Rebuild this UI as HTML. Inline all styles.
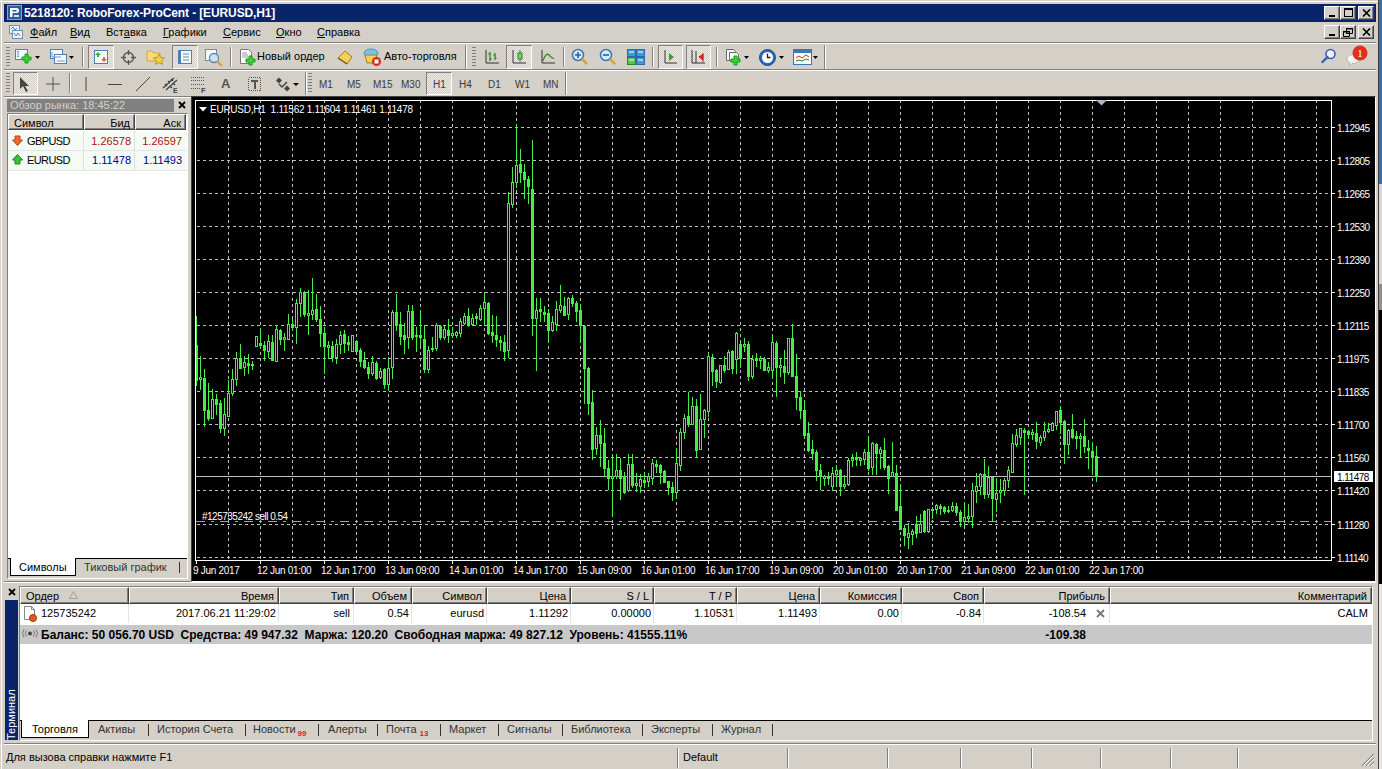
<!DOCTYPE html>
<html><head><meta charset="utf-8">
<style>
*{margin:0;padding:0;box-sizing:border-box}
html,body{width:1382px;height:769px;overflow:hidden;background:#d4d0c8;font-family:"Liberation Sans",sans-serif;font-size:11px;color:#000}
.a{position:absolute}
.t{position:absolute;white-space:nowrap;line-height:13px}
.btn3d{position:absolute;background:#d4d0c8;border-top:1px solid #fff;border-left:1px solid #fff;border-right:1px solid #404040;border-bottom:1px solid #404040;box-shadow:inset -1px -1px 0 #808080}
.pressed{position:absolute;border-top:1px solid #808080;border-left:1px solid #808080;border-right:1px solid #fff;border-bottom:1px solid #fff;background-color:#ece9e4;background-image:linear-gradient(45deg,#d4d0c8 25%,transparent 25%,transparent 75%,#d4d0c8 75%),linear-gradient(45deg,#d4d0c8 25%,transparent 25%,transparent 75%,#d4d0c8 75%);background-size:2px 2px;background-position:0 0,1px 1px}
.hsep{position:absolute;height:2px;border-top:1px solid #808080;border-bottom:1px solid #fff}
.vsep{position:absolute;width:2px;border-left:1px solid #808080;border-right:1px solid #fff}
.grip{position:absolute;width:4px;background:repeating-linear-gradient(to bottom,#808080 0,#808080 1px,transparent 1px,transparent 3px)}
.hd{position:absolute;top:0;height:17px;background:#d4d0c8;border-top:1px solid #fff;border-left:1px solid #fff;border-right:1px solid #404040;border-bottom:1px solid #404040;box-shadow:inset -1px -1px 0 #808080;text-align:right;padding-right:4px;line-height:14px;overflow:hidden;white-space:nowrap}
.cell{position:absolute;white-space:nowrap;text-align:right;line-height:14px}
.tab{position:absolute;white-space:nowrap;color:#333;line-height:13px}
.sb{position:absolute;top:748px;width:2px;height:20px;border-left:1px solid #808080;border-right:1px solid #fff}
</style></head><body>
<!-- desktop strip right -->
<div class="a" style="left:1378px;top:0;width:1px;height:769px;background:#404040"></div>
<div class="a" style="left:1379px;top:0;width:3px;height:184px;background:#3a6ea5"></div>
<div class="a" style="left:1379px;top:184px;width:3px;height:100px;background:#d8d8d8"></div>
<div class="a" style="left:1379px;top:284px;width:3px;height:26px;background:#909090"></div>
<div class="a" style="left:1379px;top:310px;width:3px;height:274px;background:#000"></div>
<div class="a" style="left:1379px;top:584px;width:3px;height:185px;background:#e8e8e8"></div>
<div class="a" style="left:1px;top:0;width:1px;height:769px;background:#fff"></div>
<div class="a" style="left:0;top:1px;width:1378px;height:1px;background:#fff"></div>

<!-- title bar -->
<div class="a" style="left:4px;top:4px;width:1372px;height:18px;background:#0a246a"></div>
<svg class="a" style="left:7px;top:5px" width="15" height="15" viewBox="0 0 15 15">
<rect x="0.5" y="0.5" width="14" height="14" fill="#2c5c9c" stroke="#7fa6d8"/>
<path d="M3 3h6.5a2.5 2.5 0 0 1 0 5H5.5v4H3z M5.5 5v1.5h3.5a.75.75 0 0 0 0-1.5z" fill="#fff" fill-rule="evenodd"/>
<rect x="7" y="10" width="5" height="2" fill="#cfe4ff"/>
</svg>
<div class="t" style="left:24px;top:5px;color:#fff;font-weight:bold;font-size:12px;line-height:16px;letter-spacing:-0.12px">5218120: RoboForex-ProCent - [EURUSD,H1]</div>
<div class="btn3d" style="left:1324px;top:6px;width:16px;height:14px"><div class="a" style="left:4px;top:8px;width:6px;height:2px;background:#000"></div></div>
<div class="btn3d" style="left:1340px;top:6px;width:16px;height:14px"><div class="a" style="left:3px;top:1px;width:9px;height:9px;border:1px solid #000;border-top-width:2px"></div></div>
<div class="btn3d" style="left:1358px;top:6px;width:16px;height:14px"><svg class="a" style="left:3px;top:2px" width="9" height="8"><path d="M1 0.5L8 7.5M8 0.5L1 7.5" stroke="#000" stroke-width="1.6"/></svg></div>

<!-- menu bar -->
<svg class="a" style="left:9px;top:25px" width="14" height="14" viewBox="0 0 14 14">
<rect x="0.5" y="0.5" width="10" height="8" fill="#e9f2fb" stroke="#6d8fb5"/>
<rect x="3.5" y="5.5" width="10" height="8" fill="#e9f2fb" stroke="#6d8fb5"/>
<path d="M2 4l2-2 2 3 2-2" stroke="#5a7fae" fill="none"/><path d="M5 8l2 3 2-3 2 3" stroke="#5a7fae" fill="none"/>
</svg>
<div class="t" style="left:30px;top:25px;font-size:11px;line-height:15px"><u>Ф</u>айл</div>
<div class="t" style="left:70px;top:25px;font-size:11px;line-height:15px"><u>В</u>ид</div>
<div class="t" style="left:106px;top:25px;font-size:11px;line-height:15px">Вст<u>а</u>вка</div>
<div class="t" style="left:163px;top:25px;font-size:11px;line-height:15px"><u>Г</u>рафики</div>
<div class="t" style="left:223px;top:25px;font-size:11px;line-height:15px"><u>С</u>ервис</div>
<div class="t" style="left:276px;top:25px;font-size:11px;line-height:15px"><u>О</u>кно</div>
<div class="t" style="left:317px;top:25px;font-size:11px;line-height:15px"><u>С</u>правка</div>
<div class="btn3d" style="left:1324px;top:25px;width:16px;height:14px"><div class="a" style="left:4px;top:8px;width:6px;height:2px;background:#000"></div></div>
<div class="btn3d" style="left:1340px;top:25px;width:16px;height:14px"><svg class="a" style="left:2px;top:1px" width="10" height="10"><path d="M3.5 1.5h6v5h-6z M0.5 4.5h6v5h-6z" stroke="#000" fill="#d4d0c8"/><path d="M3 1h7v1.5H3zM0 4h7v1.5H0z" fill="#000"/></svg></div>
<div class="btn3d" style="left:1358px;top:25px;width:16px;height:14px"><svg class="a" style="left:3px;top:2px" width="9" height="8"><path d="M1 0.5L8 7.5M8 0.5L1 7.5" stroke="#000" stroke-width="1.6"/></svg></div>

<div class="hsep" style="left:4px;top:42px;width:1372px"></div>

<!-- toolbar row 1 -->
<div class="grip" style="left:6px;top:47px;height:20px"></div>
<!-- new chart -->
<svg class="a" style="left:14px;top:48px" width="20" height="18" viewBox="0 0 20 18">
<rect x="1.5" y="1.5" width="12" height="10" fill="#f4f9ff" stroke="#4f7fb5"/>
<path d="M4 3v6M3 4l1-1 1 1M3 8l1 1 1-1" stroke="#7a98b8" fill="none"/>
<path d="M11 6h3v3h3v3h-3v3h-3v-3H8V9h3z" fill="#3bd13b" stroke="#189a18"/>
</svg>
<svg class="a" style="left:35px;top:56px" width="5" height="3"><path d="M0 0h5L2.5 3z" fill="#000"/></svg>
<!-- profiles -->
<svg class="a" style="left:49px;top:48px" width="20" height="18" viewBox="0 0 20 18">
<rect x="1.5" y="1.5" width="12" height="9" fill="#f4f9ff" stroke="#4f7fb5"/>
<rect x="5.5" y="6.5" width="12" height="9" fill="#f4f9ff" stroke="#4f7fb5"/>
<path d="M3 4v5h9M8 13h8" stroke="#7a98b8" fill="none"/>
</svg>
<svg class="a" style="left:69px;top:56px" width="5" height="3"><path d="M0 0h5L2.5 3z" fill="#000"/></svg>
<div class="vsep" style="left:82px;top:47px;height:20px"></div>
<div class="pressed" style="left:88px;top:45px;width:26px;height:24px"></div>
<svg class="a" style="left:92px;top:48px" width="18" height="18" viewBox="0 0 18 18">
<rect x="2.5" y="2.5" width="13" height="13" fill="#f4f9ff" stroke="#4f7fb5"/>
<path d="M6 4l3 3H7v2H5V7H3z" fill="#2fb52f"/>
<path d="M9 14l3-3h-2V9H8v2H6z" fill="#e8663a" transform="translate(3 0)"/>
</svg>
<!-- navigator crosshair -->
<svg class="a" style="left:120px;top:49px" width="17" height="17" viewBox="0 0 17 17">
<circle cx="8.5" cy="8.5" r="5" stroke="#555" stroke-width="1.3" fill="none"/>
<path d="M8.5 1v5M8.5 11v5M1 8.5h5M11 8.5h5" stroke="#555" stroke-width="1.3"/>
</svg>
<!-- folder star -->
<svg class="a" style="left:146px;top:48px" width="20" height="18" viewBox="0 0 20 18">
<path d="M1 3h5l2 2h6v8H1z" fill="#f5dc7a" stroke="#c9a640"/>
<path d="M13 6l1.7 3.5 3.8.5-2.8 2.6.7 3.8L13 14.6l-3.4 1.8.7-3.8-2.8-2.6 3.8-.5z" fill="#f7d33a" stroke="#b8922a"/>
</svg>
<div class="pressed" style="left:172px;top:45px;width:26px;height:24px"></div>
<svg class="a" style="left:176px;top:48px" width="18" height="18" viewBox="0 0 18 18">
<rect x="2.5" y="2.5" width="13" height="13" fill="#f4f9ff" stroke="#4f7fb5"/>
<rect x="3" y="3" width="2" height="12" fill="#4f7fb5"/>
<path d="M7 6h6M7 9h6M7 12h6" stroke="#6b8bb0"/>
</svg>
<!-- tester -->
<svg class="a" style="left:204px;top:48px" width="20" height="19" viewBox="0 0 20 19">
<rect x="1.5" y="1.5" width="11" height="11" fill="#f4f9ff" stroke="#6b8bb0"/>
<circle cx="10" cy="10" r="4.5" fill="#cfe3f5" stroke="#5a83b0" stroke-width="1.3"/>
<path d="M13 13l5 5" stroke="#d6a53a" stroke-width="2.4"/>
</svg>
<div class="vsep" style="left:230px;top:47px;height:20px"></div>
<!-- new order -->
<svg class="a" style="left:239px;top:48px" width="18" height="20" viewBox="0 0 18 20">
<path d="M1.5 1.5h8l3 3v11h-11z" fill="#fff" stroke="#777"/>
<path d="M3 5h5M3 7h6M3 9h6" stroke="#999"/>
<path d="M10 8h3v3h3v3h-3v3h-3v-3H7v-3h3z" fill="#3bd13b" stroke="#189a18"/>
</svg>
<div class="t" style="left:257px;top:50px">Новый ордер</div>
<!-- metaeditor -->
<svg class="a" style="left:336px;top:49px" width="18" height="17" viewBox="0 0 18 17">
<path d="M2 9l7-7 7 6-5 7z" fill="#f2cf55" stroke="#a67d22"/>
<path d="M2 9l9 6" stroke="#7a5a18" stroke-width="1.5"/>
</svg>
<!-- autotrading -->
<svg class="a" style="left:363px;top:47px" width="19" height="20" viewBox="0 0 19 20">
<ellipse cx="8" cy="6" rx="7" ry="4" fill="#7cc0ea" stroke="#4c8fc0"/>
<path d="M2 8h12l-2 8H4z" fill="#f2cf55" stroke="#a67d22"/>
<circle cx="13.5" cy="14.5" r="4.5" fill="#d62a1a"/>
<rect x="11.5" y="12.5" width="4" height="4" fill="#fff"/>
</svg>
<div class="t" style="left:384px;top:50px">Авто-торговля</div>
<!-- toolbar 1b -->
<div class="vsep" style="left:465px;top:45px;height:24px"></div>
<div class="grip" style="left:472px;top:47px;height:20px"></div>
<svg class="a" style="left:484px;top:49px" width="16" height="16" viewBox="0 0 16 16">
<path d="M2 1v13h13" stroke="#333" fill="none"/>
<path d="M6 3v9M4.5 5h1.5M6 10h1.5M11 4v7M9.5 6h1.5M11 9h1.5" stroke="#2a8a2a" stroke-width="1.3"/>
</svg>
<div class="pressed" style="left:506px;top:45px;width:26px;height:24px"></div>
<svg class="a" style="left:511px;top:49px" width="16" height="16" viewBox="0 0 16 16">
<path d="M2 1v13h13" stroke="#333" fill="none"/>
<path d="M9 1v12" stroke="#2a8a2a"/><rect x="7" y="4" width="4" height="6" fill="#6fd26f" stroke="#2a8a2a"/>
</svg>
<svg class="a" style="left:540px;top:49px" width="16" height="16" viewBox="0 0 16 16">
<path d="M2 1v13h13" stroke="#333" fill="none"/>
<path d="M3 12c2-6 4-8 6-6s3 4 5 3" stroke="#2a8a2a" fill="none" stroke-width="1.2"/>
</svg>
<div class="vsep" style="left:563px;top:47px;height:20px"></div>
<svg class="a" style="left:571px;top:48px" width="18" height="18" viewBox="0 0 18 18">
<circle cx="7" cy="7" r="5.5" fill="#d9ecfb" stroke="#3b77b8" stroke-width="1.5"/>
<path d="M4 7h6M7 4v6" stroke="#2060a8" stroke-width="1.6"/>
<path d="M11 11l5 5" stroke="#d6a53a" stroke-width="2.5"/>
</svg>
<svg class="a" style="left:599px;top:48px" width="18" height="18" viewBox="0 0 18 18">
<circle cx="7" cy="7" r="5.5" fill="#d9ecfb" stroke="#3b77b8" stroke-width="1.5"/>
<path d="M4 7h6" stroke="#2060a8" stroke-width="1.6"/>
<path d="M11 11l5 5" stroke="#d6a53a" stroke-width="2.5"/>
</svg>
<svg class="a" style="left:627px;top:49px" width="18" height="17" viewBox="0 0 18 17">
<rect x="0.5" y="0.5" width="8" height="7" fill="#3b9bd8" stroke="#2a6aa8"/><rect x="9.5" y="0.5" width="8" height="7" fill="#3b9bd8" stroke="#2a6aa8"/>
<rect x="0.5" y="8.5" width="8" height="7" fill="#5cc05c" stroke="#2a8a2a"/><rect x="9.5" y="8.5" width="8" height="7" fill="#3b9bd8" stroke="#2a6aa8"/>
<path d="M2 3h5M11 3h5M2 11h5M11 11h5" stroke="#fff"/>
</svg>
<div class="vsep" style="left:652px;top:47px;height:20px"></div>
<div class="pressed" style="left:658px;top:45px;width:25px;height:24px"></div>
<svg class="a" style="left:662px;top:49px" width="16" height="16" viewBox="0 0 16 16">
<path d="M3 1v13h12" stroke="#333" fill="none"/><path d="M7 4l5 4-5 4z" fill="#2fa52f"/>
</svg>
<div class="pressed" style="left:686px;top:45px;width:25px;height:24px"></div>
<svg class="a" style="left:690px;top:49px" width="16" height="16" viewBox="0 0 16 16">
<path d="M2 1v13h13M6 2v12" stroke="#333" fill="none"/><path d="M13 4v9M9 8l4-3v6z" stroke="#d62a1a" fill="#d62a1a"/>
</svg>
<div class="vsep" style="left:716px;top:47px;height:20px"></div>
<svg class="a" style="left:725px;top:47px" width="19" height="20" viewBox="0 0 19 20">
<path d="M1.5 2.5h7l2 2v9h-9z" fill="#fff" stroke="#666"/><path d="M4.5 5.5h7l2 2v6h-9z" fill="#fff" stroke="#666"/>
<path d="M9 9h3v3h3v3h-3v3H9v-3H6v-3h3z" fill="#3bd13b" stroke="#189a18"/>
</svg>
<svg class="a" style="left:744px;top:56px" width="5" height="3"><path d="M0 0h5L2.5 3z" fill="#000"/></svg>
<svg class="a" style="left:758px;top:48px" width="19" height="19" viewBox="0 0 19 19">
<circle cx="9.5" cy="9.5" r="8" fill="#2a6ab8" stroke="#1a4a90"/>
<circle cx="9.5" cy="9.5" r="5.5" fill="#fff"/>
<path d="M9.5 5.5v4h3" stroke="#222" stroke-width="1.3" fill="none"/>
</svg>
<svg class="a" style="left:779px;top:56px" width="5" height="3"><path d="M0 0h5L2.5 3z" fill="#000"/></svg>
<svg class="a" style="left:793px;top:49px" width="19" height="16" viewBox="0 0 19 16">
<rect x="0.5" y="0.5" width="18" height="15" fill="#f4f9ff" stroke="#3b77b8"/>
<rect x="1" y="1" width="17" height="3" fill="#3b77b8"/>
<path d="M3 9l3-2 3 2 4-3 3 2" stroke="#d62a1a" fill="none"/><path d="M3 12l3-1 3 1 4-2 3 1" stroke="#2a8a2a" fill="none"/>
</svg>
<svg class="a" style="left:813px;top:56px" width="5" height="3"><path d="M0 0h5L2.5 3z" fill="#000"/></svg>
<div class="vsep" style="left:824px;top:45px;height:24px"></div>
<!-- right icons -->
<svg class="a" style="left:1320px;top:48px" width="17" height="16" viewBox="0 0 17 16">
<circle cx="10.5" cy="6" r="4.5" fill="#eef4ff" stroke="#3b5bb8" stroke-width="1.6"/>
<path d="M7.5 9l-5 5" stroke="#3b5bb8" stroke-width="2.4" stroke-linecap="round"/>
</svg>
<svg class="a" style="left:1345px;top:45px" width="26" height="22" viewBox="0 0 26 22">
<ellipse cx="8" cy="14" rx="6" ry="4.5" fill="#f4f4f4" stroke="#b8b8b8"/>
<path d="M5 17l-1 4 4-3" fill="#f4f4f4" stroke="#b8b8b8"/>
<circle cx="15" cy="8" r="7.5" fill="#e0301e"/>
<text x="15" y="12" font-family="Liberation Serif" font-size="11" fill="#fff" text-anchor="middle">1</text>
</svg>
<div class="hsep" style="left:4px;top:69px;width:1372px"></div>
<!-- toolbar row 2 -->
<div class="grip" style="left:6px;top:73px;height:20px"></div>
<div class="pressed" style="left:13px;top:72px;width:25px;height:23px"></div>
<svg class="a" style="left:19px;top:76px" width="12" height="16" viewBox="0 0 12 16"><path d="M1 1v12l3-3 3 6 2-1-3-5h4z" fill="#444"/></svg>
<svg class="a" style="left:45px;top:76px" width="16" height="16" viewBox="0 0 16 16"><path d="M8 1v14M1 8h14" stroke="#555"/></svg>
<div class="vsep" style="left:69px;top:73px;height:20px"></div>
<svg class="a" style="left:84px;top:76px" width="4" height="16"><path d="M2 1v14" stroke="#444"/></svg>
<svg class="a" style="left:107px;top:76px" width="16" height="16"><path d="M1 8.5h14" stroke="#444"/></svg>
<svg class="a" style="left:135px;top:76px" width="16" height="16"><path d="M1 15L15 1" stroke="#444"/></svg>
<svg class="a" style="left:162px;top:75px" width="18" height="18" viewBox="0 0 18 18"><path d="M1 13L12 3M4 15L15 5M3 9l2 2M6 6l2 2M9 4l2 2M11 8l2 2M8 11l2 2" stroke="#444" stroke-width="1.3"/><text x="11" y="17.5" font-size="7" font-family="Liberation Sans" font-weight="bold" fill="#444">E</text></svg>
<svg class="a" style="left:191px;top:76px" width="18" height="18" viewBox="0 0 18 18" shape-rendering="crispEdges"><path d="M0 1.5h14M0 4.5h14M0 8.5h14M0 12.5h9" stroke="#555" stroke-dasharray="1 1"/><text x="10" y="17" font-size="7.5" font-family="Liberation Sans" font-weight="bold" fill="#444">F</text></svg>
<div class="t" style="left:221px;top:77px;font-size:13px;font-weight:bold;color:#555">A</div>
<svg class="a" style="left:248px;top:77px" width="14" height="15" viewBox="0 0 14 15" shape-rendering="crispEdges"><rect x="0.5" y="0.5" width="12" height="13" fill="none" stroke="#555" stroke-dasharray="1 1"/><path d="M3 3h7v2H7.5v7h-2V5H3z" fill="#555"/></svg>
<svg class="a" style="left:275px;top:77px" width="24" height="15" viewBox="0 0 24 15"><path d="M1 3.5L4 0.5 7 3.5 4 6.5z" fill="#444"/><path d="M9 11.5L12 8.5 15 11.5 12 14.5z" fill="#444"/><path d="M4 7l3 3 5-5" stroke="#444" stroke-width="1.5" fill="none"/><path d="M18 6h6l-3 3z" fill="#000"/></svg>
<div class="vsep" style="left:305px;top:72px;height:23px"></div>
<div class="grip" style="left:308px;top:73px;height:20px"></div>
<div class="t" style="left:319px;top:78px;font-size:10px;color:#3a3a3a">M1</div>
<div class="t" style="left:347px;top:78px;font-size:10px;color:#3a3a3a">M5</div>
<div class="t" style="left:373px;top:78px;font-size:10px;color:#3a3a3a">M15</div>
<div class="t" style="left:401px;top:78px;font-size:10px;color:#3a3a3a">M30</div>
<div class="pressed" style="left:426px;top:72px;width:26px;height:23px"></div>
<div class="t" style="left:433px;top:78px;font-size:10px;color:#3a3a3a">H1</div>
<div class="t" style="left:459px;top:78px;font-size:10px;color:#3a3a3a">H4</div>
<div class="t" style="left:488px;top:78px;font-size:10px;color:#3a3a3a">D1</div>
<div class="t" style="left:515px;top:78px;font-size:10px;color:#3a3a3a">W1</div>
<div class="t" style="left:543px;top:78px;font-size:10px;color:#3a3a3a">MN</div>
<div class="vsep" style="left:565px;top:72px;height:23px"></div>
<div class="hsep" style="left:4px;top:96px;width:187px"></div>


<!-- market watch -->
<div class="a" style="left:7px;top:99px;width:167px;height:13px;background:#808080"></div>
<div class="t" style="left:10px;top:99px;color:#d4d0c8;line-height:13px">Обзор рынка: 18:45:22</div>
<svg class="a" style="left:178px;top:101px" width="8" height="8"><path d="M1 1l6 6M7 1L1 7" stroke="#000" stroke-width="1.8"/></svg>
<div class="a" style="left:7px;top:113px;width:181px;height:466px;background:#fff;border-top:1px solid #808080;border-left:1px solid #808080;border-right:1px solid #fff;border-bottom:1px solid #fff"></div>
<div class="hd" style="left:8px;top:114px;width:76px;height:16px;line-height:13px;padding-top:1px;text-align:left;padding-left:5px"><span style="position:relative;top:1px">Символ</span></div>
<div class="hd" style="left:84px;top:114px;width:51px;height:16px;line-height:13px;padding-top:1px"><span style="position:relative;top:1px">Бид</span></div>
<div class="hd" style="left:135px;top:114px;width:51px;height:16px;line-height:13px;padding-top:1px"><span style="position:relative;top:1px">Аск</span></div>
<div class="a" style="left:8px;top:131px;width:179px;height:39px;background:#f4fbf4"></div>
<div class="a" style="left:8px;top:150px;width:179px;height:1px;background:#e4e4e4"></div>
<div class="a" style="left:8px;top:170px;width:179px;height:1px;background:#e4e4e4"></div>
<div class="a" style="left:83px;top:131px;width:1px;height:39px;background:#e0e0e0"></div>
<div class="a" style="left:134px;top:131px;width:1px;height:39px;background:#e0e0e0"></div>
<svg class="a" style="left:12px;top:135px" width="11" height="11" viewBox="0 0 11 11"><path d="M3 1h5v4h2.5L5.5 10.5 0.5 5H3z" fill="#f06a30" stroke="#b84818"/></svg>
<svg class="a" style="left:12px;top:154px" width="11" height="11" viewBox="0 0 11 11"><path d="M3 10h5V6h2.5L5.5 0.5 0.5 6H3z" fill="#3cc03c" stroke="#1a8a1a"/></svg>
<div class="t" style="left:27px;top:135px;letter-spacing:-0.6px">GBPUSD</div>
<div class="t" style="left:27px;top:154px;letter-spacing:-0.6px">EURUSD</div>
<div class="cell" style="left:84px;top:134px;width:47px;color:#b01010">1.26578</div>
<div class="cell" style="left:135px;top:134px;width:47px;color:#b01010">1.26597</div>
<div class="cell" style="left:84px;top:153px;width:47px;color:#000090">1.11478</div>
<div class="cell" style="left:135px;top:153px;width:47px;color:#000090">1.11493</div>
<!-- tabs -->
<div class="a" style="left:8px;top:558px;width:179px;height:20px;background:#d4d0c8;border-top:1px solid #000"></div>
<div class="a" style="left:10px;top:558px;width:66px;height:18px;background:#fff;border-left:1px solid #000;border-bottom:1px solid #000;border-right:1px solid #000"></div>
<div class="t" style="left:19px;top:561px">Символы</div>
<div class="t" style="left:84px;top:561px;color:#333">Тиковый график</div>
<div class="a" style="left:179px;top:562px;width:1px;height:11px;background:#333"></div>

<div class="hsep" style="left:4px;top:581px;width:187px"></div>


<!-- chart window -->
<div class="a" style="left:191px;top:96px;width:1185px;height:486px;border-top:1px solid #404040;border-left:1px solid #404040;border-right:1px solid #fff;border-bottom:1px solid #fff"></div>
<div class="a" style="left:192px;top:97px;width:1183px;height:484px;overflow:hidden">
<svg width="1183" height="484" viewBox="192 97 1183 484" shape-rendering="crispEdges" style="position:absolute;left:0;top:0">
<rect x="192" y="97" width="1183" height="484" fill="#000"/>
<path d="M196 127.5H1331 M196 160.5H1331 M196 193.5H1331 M196 226.5H1331 M196 259.5H1331 M196 292.5H1331 M196 325.5H1331 M196 358.5H1331 M196 391.5H1331 M196 424.5H1331 M196 457.5H1331 M196 490.5H1331 M196 524.5H1331 M196 557.5H1331" stroke="#c0c0c0" stroke-width="1" stroke-dasharray="3 3" stroke-dashoffset="-1" fill="none"/>
<path d="M228.5 100V560 M260.5 100V560 M292.5 100V560 M324.5 100V560 M356.5 100V560 M388.5 100V560 M420.5 100V560 M452.5 100V560 M484.5 100V560 M516.5 100V560 M548.5 100V560 M580.5 100V560 M612.5 100V560 M644.5 100V560 M676.5 100V560 M708.5 100V560 M740.5 100V560 M772.5 100V560 M804.5 100V560 M836.5 100V560 M868.5 100V560 M900.5 100V560 M932.5 100V560 M964.5 100V560 M996.5 100V560 M1028.5 100V560 M1060.5 100V560 M1092.5 100V560 M1124.5 100V560 M1156.5 100V560 M1188.5 100V560 M1220.5 100V560 M1252.5 100V560 M1284.5 100V560 M1316.5 100V560" stroke="#c0c0c0" stroke-width="1" stroke-dasharray="3 3" fill="none"/>
<path d="M196 521.5H1331" stroke="#5fd35f" stroke-width="1" stroke-dasharray="9 6 3 6" fill="none"/>
<path d="M196 476.5H1331" stroke="#c0c0c0" stroke-width="1" fill="none"/>
<path d="M196.5 316V386 M200.5 356V390 M204.5 369V427 M208.5 383V421 M212.5 389V419 M216.5 394V415 M220.5 400V433 M224.5 398V436 M228.5 380V417 M232.5 369V396 M236.5 352V386 M240.5 344V369 M244.5 356V376 M248.5 354V374 M252.5 361V370 M256.5 336V347 M260.5 328V349 M264.5 341V361 M268.5 335V358 M272.5 335V361 M276.5 325V362 M280.5 329V345 M284.5 333V351 M288.5 314V340 M292.5 319V330 M296.5 299V344 M300.5 288V317 M304.5 291V317 M308.5 290V335 M312.5 278V320 M316.5 294V322 M320.5 306V347 M324.5 327V374 M328.5 341V359 M332.5 341V362 M336.5 339V364 M340.5 331V354 M344.5 330V353 M348.5 336V351 M352.5 335V352 M356.5 340V352 M360.5 348V367 M364.5 352V369 M368.5 362V379 M372.5 356V376 M376.5 361V380 M380.5 368V379 M384.5 368V389 M388.5 357V391 M392.5 310V379 M396.5 294V331 M400.5 312V345 M404.5 323V354 M408.5 305V349 M412.5 305V340 M416.5 327V352 M420.5 310V346 M424.5 325V373 M428.5 346V373 M432.5 337V352 M436.5 323V351 M440.5 325V340 M444.5 326V340 M448.5 319V343 M452.5 327V338 M456.5 331V338 M460.5 318V337 M464.5 313V325 M468.5 308V327 M472.5 314V326 M476.5 313V325 M480.5 305V321 M484.5 292V326 M488.5 302V335 M492.5 315V343 M496.5 316V347 M500.5 336V351 M504.5 335V361 M508.5 192V358 M512.5 167V208 M516.5 124V188 M520.5 149V183 M524.5 164V199 M528.5 176V204 M532.5 140V336 M536.5 298V371 M540.5 298V322 M544.5 306V322 M548.5 309V343 M552.5 316V332 M556.5 301V331 M560.5 285V313 M564.5 297V316 M568.5 297V320 M572.5 295V307 M576.5 301V322 M580.5 304V343 M584.5 325V404 M588.5 367V415 M592.5 390V460 M596.5 427V455 M600.5 420V467 M604.5 428V477 M608.5 460V490 M612.5 455V517 M616.5 454V479 M620.5 458V500 M624.5 472V494 M628.5 454V492 M632.5 454V488 M636.5 473V492 M640.5 474V493 M644.5 472V488 M648.5 473V487 M652.5 459V485 M656.5 460V473 M660.5 464V484 M664.5 470V483 M668.5 481V495 M672.5 482V501 M676.5 448V498 M680.5 428V471 M684.5 414V439 M688.5 392V427 M692.5 397V425 M696.5 399V457 M700.5 394V450 M704.5 409V438 M708.5 353V417 M712.5 354V386 M716.5 369V388 M720.5 365V384 M724.5 356V373 M728.5 350V370 M732.5 350V374 M736.5 332V374 M740.5 343V368 M744.5 338V352 M748.5 341V381 M752.5 355V379 M756.5 353V367 M760.5 356V369 M764.5 357V371 M768.5 362V373 M772.5 335V379 M776.5 341V397 M780.5 358V377 M784.5 350V384 M788.5 338V375 M792.5 324V377 M796.5 354V410 M800.5 391V419 M804.5 401V437 M808.5 422V452 M812.5 440V460 M816.5 450V481 M820.5 464V490 M824.5 475V486 M828.5 472V485 M832.5 467V491 M836.5 465V485 M840.5 469V496 M844.5 475V489 M848.5 458V486 M852.5 454V467 M856.5 452V466 M860.5 457V466 M864.5 449V465 M868.5 437V471 M872.5 442V475 M876.5 443V475 M880.5 447V469 M884.5 438V470 M888.5 465V494 M892.5 442V477 M896.5 465V511 M900.5 484V530 M904.5 525V546 M908.5 523V549 M912.5 529V545 M916.5 516V538 M920.5 514V533 M924.5 510V533 M928.5 509V533 M932.5 507V519 M936.5 504V514 M940.5 504V515 M944.5 506V514 M948.5 506V513 M952.5 502V512 M956.5 503V516 M960.5 510V527 M964.5 502V526 M968.5 504V523 M972.5 483V528 M976.5 473V503 M980.5 473V495 M984.5 459V499 M988.5 466V498 M992.5 477V522 M996.5 478V512 M1000.5 479V503 M1004.5 478V496 M1008.5 466V488 M1012.5 434V473 M1016.5 429V447 M1020.5 428V445 M1024.5 428V495 M1028.5 430V439 M1032.5 429V440 M1036.5 422V449 M1040.5 435V446 M1044.5 422V441 M1048.5 423V433 M1052.5 422V431 M1056.5 411V430 M1060.5 406V434 M1064.5 420V464 M1068.5 429V455 M1072.5 414V439 M1076.5 431V449 M1080.5 433V458 M1084.5 419V453 M1088.5 440V469 M1092.5 442V475 M1096.5 446V482" stroke="#48ec48" stroke-width="1" fill="none"/>
<path d="M195 345h3v36h-3z M203 378h3v33h-3z M207 410h3v9h-3z M215 399h3v6h-3z M219 403h3v26h-3z M239 358h3v11h-3z M247 363h3v3h-3z M251 364h3v2h-3z M259 343h3v3h-3z M263 345h3v6h-3z M271 342h3v19h-3z M279 330h3v10h-3z M291 324h3v4h-3z M303 292h3v23h-3z M315 309h3v11h-3z M319 319h3v15h-3z M323 333h3v14h-3z M331 346h3v12h-3z M343 334h3v10h-3z M347 342h3v3h-3z M355 341h3v11h-3z M359 350h3v12h-3z M363 360h3v8h-3z M367 367h3v7h-3z M375 363h3v16h-3z M383 369h3v16h-3z M395 312h3v14h-3z M399 324h3v13h-3z M403 335h3v5h-3z M411 311h3v27h-3z M415 335h3v2h-3z M419 335h3v3h-3z M423 339h3v31h-3z M431 348h3v2h-3z M439 326h3v12h-3z M447 330h3v6h-3z M467 316h3v10h-3z M475 316h3v3h-3z M487 303h3v31h-3z M491 332h3v4h-3z M495 335h3v5h-3z M499 340h3v3h-3z M503 342h3v10h-3z M519 164h3v9h-3z M523 172h3v8h-3z M527 179h3v8h-3z M531 189h3v130h-3z M539 309h3v3h-3z M543 312h3v3h-3z M547 313h3v18h-3z M563 306h3v10h-3z M571 298h3v6h-3z M575 303h3v9h-3z M579 310h3v16h-3z M583 326h3v43h-3z M587 368h3v36h-3z M591 402h3v48h-3z M599 435h3v9h-3z M603 443h3v26h-3z M607 468h3v11h-3z M619 470h3v9h-3z M623 476h3v17h-3z M631 464h3v22h-3z M643 480h3v3h-3z M655 464h3v3h-3z M659 465h3v8h-3z M663 471h3v12h-3z M667 481h3v7h-3z M671 487h3v6h-3z M687 416h3v9h-3z M695 406h3v45h-3z M711 357h3v15h-3z M715 370h3v12h-3z M723 365h3v6h-3z M731 351h3v18h-3z M739 344h3v15h-3z M747 344h3v33h-3z M755 358h3v3h-3z M763 359h3v12h-3z M775 343h3v25h-3z M783 366h3v7h-3z M791 338h3v39h-3z M795 376h3v22h-3z M799 397h3v14h-3z M803 410h3v26h-3z M807 433h3v18h-3z M811 449h3v5h-3z M815 452h3v19h-3z M819 470h3v7h-3z M827 476h3v3h-3z M839 470h3v17h-3z M855 457h3v3h-3z M867 452h3v17h-3z M875 444h3v10h-3z M883 450h3v18h-3z M887 466h3v13h-3z M895 473h3v38h-3z M899 506h3v24h-3z M903 528h3v8h-3z M915 524h3v10h-3z M923 511h3v21h-3z M931 509h3v2h-3z M939 506h3v3h-3z M943 507h3v5h-3z M947 510h3v2h-3z M955 506h3v7h-3z M959 512h3v10h-3z M983 474h3v21h-3z M991 477h3v22h-3z M1023 430h3v3h-3z M1027 431h3v4h-3z M1035 433h3v9h-3z M1059 410h3v13h-3z M1063 421h3v24h-3z M1071 429h3v9h-3z M1075 436h3v3h-3z M1083 436h3v11h-3z M1087 448h3v3h-3z M1091 451h3v7h-3z M1095 456h3v21h-3z" fill="#48ec48"/>
<path d="M199 377h3v3h-3z M211 399h3v20h-3z M223 414h3v15h-3z M227 393h3v24h-3z M231 379h3v15h-3z M235 358h3v22h-3z M243 362h3v6h-3z M255 336h3v11h-3z M267 341h3v11h-3z M275 329h3v33h-3z M283 337h3v3h-3z M287 324h3v16h-3z M295 303h3v25h-3z M299 292h3v12h-3z M307 313h3v3h-3z M311 310h3v5h-3z M327 345h3v3h-3z M335 344h3v14h-3z M339 335h3v10h-3z M351 335h3v17h-3z M371 362h3v12h-3z M379 371h3v7h-3z M387 368h3v17h-3z M391 312h3v56h-3z M407 311h3v27h-3z M427 350h3v20h-3z M435 325h3v24h-3z M443 329h3v9h-3z M451 333h3v3h-3z M455 332h3v4h-3z M459 321h3v13h-3z M463 316h3v8h-3z M471 318h3v7h-3z M479 308h3v12h-3z M483 302h3v7h-3z M507 203h3v148h-3z M511 182h3v23h-3z M515 165h3v18h-3z M535 310h3v9h-3z M551 322h3v9h-3z M555 309h3v16h-3z M559 305h3v6h-3z M567 298h3v17h-3z M595 435h3v14h-3z M611 476h3v3h-3z M615 470h3v7h-3z M627 464h3v27h-3z M635 483h3v3h-3z M639 479h3v8h-3z M647 476h3v6h-3z M651 463h3v16h-3z M675 463h3v30h-3z M679 432h3v34h-3z M683 418h3v15h-3z M691 406h3v19h-3z M699 419h3v31h-3z M703 410h3v10h-3z M707 356h3v56h-3z M719 365h3v18h-3z M727 352h3v18h-3z M735 333h3v27h-3z M743 344h3v3h-3z M751 359h3v18h-3z M759 358h3v3h-3z M767 367h3v4h-3z M771 342h3v29h-3z M779 365h3v3h-3z M787 338h3v35h-3z M823 476h3v3h-3z M831 473h3v14h-3z M835 470h3v5h-3z M843 484h3v3h-3z M847 460h3v25h-3z M851 458h3v3h-3z M859 458h3v3h-3z M863 452h3v8h-3z M871 443h3v25h-3z M879 449h3v5h-3z M891 472h3v5h-3z M907 533h3v5h-3z M911 531h3v4h-3z M919 524h3v9h-3z M927 509h3v23h-3z M935 505h3v5h-3z M951 506h3v5h-3z M963 517h3v5h-3z M967 516h3v3h-3z M971 490h3v27h-3z M975 486h3v6h-3z M979 474h3v13h-3z M987 477h3v18h-3z M995 493h3v7h-3z M999 490h3v3h-3z M1003 480h3v11h-3z M1007 470h3v11h-3z M1011 443h3v30h-3z M1015 435h3v10h-3z M1019 428h3v10h-3z M1031 432h3v3h-3z M1039 437h3v6h-3z M1043 431h3v7h-3z M1047 429h3v3h-3z M1051 423h3v8h-3z M1055 411h3v15h-3z M1067 430h3v15h-3z M1079 436h3v3h-3z" fill="#48ec48"/>
<path d="M200 378h1v1h-1z M212 400h1v18h-1z M224 415h1v13h-1z M228 394h1v22h-1z M232 380h1v13h-1z M236 359h1v20h-1z M244 363h1v4h-1z M256 337h1v9h-1z M268 342h1v9h-1z M276 330h1v31h-1z M284 338h1v1h-1z M288 325h1v14h-1z M296 304h1v23h-1z M300 293h1v10h-1z M308 314h1v1h-1z M312 311h1v3h-1z M328 346h1v1h-1z M336 345h1v12h-1z M340 336h1v8h-1z M352 336h1v15h-1z M372 363h1v10h-1z M380 372h1v5h-1z M388 369h1v15h-1z M392 313h1v54h-1z M408 312h1v25h-1z M428 351h1v18h-1z M436 326h1v22h-1z M444 330h1v7h-1z M452 334h1v1h-1z M456 333h1v2h-1z M460 322h1v11h-1z M464 317h1v6h-1z M472 319h1v5h-1z M480 309h1v10h-1z M484 303h1v5h-1z M508 204h1v146h-1z M512 183h1v21h-1z M516 166h1v16h-1z M536 311h1v7h-1z M552 323h1v7h-1z M556 310h1v14h-1z M560 306h1v4h-1z M568 299h1v15h-1z M596 436h1v12h-1z M612 477h1v1h-1z M616 471h1v5h-1z M628 465h1v25h-1z M636 484h1v1h-1z M640 480h1v6h-1z M648 477h1v4h-1z M652 464h1v14h-1z M676 464h1v28h-1z M680 433h1v32h-1z M684 419h1v13h-1z M692 407h1v17h-1z M700 420h1v29h-1z M704 411h1v8h-1z M708 357h1v54h-1z M720 366h1v16h-1z M728 353h1v16h-1z M736 334h1v25h-1z M744 345h1v1h-1z M752 360h1v16h-1z M760 359h1v1h-1z M768 368h1v2h-1z M772 343h1v27h-1z M780 366h1v1h-1z M788 339h1v33h-1z M824 477h1v1h-1z M832 474h1v12h-1z M836 471h1v3h-1z M844 485h1v1h-1z M848 461h1v23h-1z M852 459h1v1h-1z M860 459h1v1h-1z M864 453h1v6h-1z M872 444h1v23h-1z M880 450h1v3h-1z M892 473h1v3h-1z M908 534h1v3h-1z M912 532h1v2h-1z M920 525h1v7h-1z M928 510h1v21h-1z M936 506h1v3h-1z M952 507h1v3h-1z M964 518h1v3h-1z M968 517h1v1h-1z M972 491h1v25h-1z M976 487h1v4h-1z M980 475h1v11h-1z M988 478h1v16h-1z M996 494h1v5h-1z M1000 491h1v1h-1z M1004 481h1v9h-1z M1008 471h1v9h-1z M1012 444h1v28h-1z M1016 436h1v8h-1z M1020 429h1v8h-1z M1032 433h1v1h-1z M1040 438h1v4h-1z M1044 432h1v5h-1z M1048 430h1v1h-1z M1052 424h1v6h-1z M1056 412h1v13h-1z M1068 431h1v13h-1z M1080 437h1v1h-1z" fill="#000"/>
<path d="M195.5 100.5H1331.5V560.5H195.5Z" stroke="#fff" fill="none"/>
<path d="M1332 127.5h3 M1332 160.5h3 M1332 193.5h3 M1332 226.5h3 M1332 259.5h3 M1332 292.5h3 M1332 325.5h3 M1332 358.5h3 M1332 391.5h3 M1332 424.5h3 M1332 457.5h3 M1332 490.5h3 M1332 524.5h3 M1332 557.5h3 M196.5 561v3 M260.5 561v3 M324.5 561v3 M388.5 561v3 M452.5 561v3 M516.5 561v3 M580.5 561v3 M644.5 561v3 M708.5 561v3 M772.5 561v3 M836.5 561v3 M900.5 561v3 M964.5 561v3 M1028.5 561v3 M1092.5 561v3" stroke="#fff" fill="none"/>
</svg>
<svg class="a" style="left:7px;top:10px" width="8" height="5"><path d="M0 0h8L4 4.5z" fill="#fff"/></svg>
<div class="t" style="left:18px;top:7px;color:#fff;font-size:10px;letter-spacing:-0.5px;line-height:12px;letter-spacing:-0.25px">EURUSD,H1&nbsp;&nbsp;1.11562 1.11604 1.11461 1.11478</div>
<div class="t" style="left:1145px;top:26px;color:#fff;font-size:10px;letter-spacing:-0.5px;line-height:12px;letter-spacing:-0.5px">1.12945</div>
<div class="t" style="left:1145px;top:59px;color:#fff;font-size:10px;letter-spacing:-0.5px;line-height:12px;letter-spacing:-0.5px">1.12805</div>
<div class="t" style="left:1145px;top:92px;color:#fff;font-size:10px;letter-spacing:-0.5px;line-height:12px;letter-spacing:-0.5px">1.12665</div>
<div class="t" style="left:1145px;top:125px;color:#fff;font-size:10px;letter-spacing:-0.5px;line-height:12px;letter-spacing:-0.5px">1.12530</div>
<div class="t" style="left:1145px;top:158px;color:#fff;font-size:10px;letter-spacing:-0.5px;line-height:12px;letter-spacing:-0.5px">1.12390</div>
<div class="t" style="left:1145px;top:191px;color:#fff;font-size:10px;letter-spacing:-0.5px;line-height:12px;letter-spacing:-0.5px">1.12250</div>
<div class="t" style="left:1145px;top:224px;color:#fff;font-size:10px;letter-spacing:-0.5px;line-height:12px;letter-spacing:-0.5px">1.12115</div>
<div class="t" style="left:1145px;top:257px;color:#fff;font-size:10px;letter-spacing:-0.5px;line-height:12px;letter-spacing:-0.5px">1.11975</div>
<div class="t" style="left:1145px;top:290px;color:#fff;font-size:10px;letter-spacing:-0.5px;line-height:12px;letter-spacing:-0.5px">1.11835</div>
<div class="t" style="left:1145px;top:323px;color:#fff;font-size:10px;letter-spacing:-0.5px;line-height:12px;letter-spacing:-0.5px">1.11700</div>
<div class="t" style="left:1145px;top:356px;color:#fff;font-size:10px;letter-spacing:-0.5px;line-height:12px;letter-spacing:-0.5px">1.11560</div>
<div class="t" style="left:1145px;top:389px;color:#fff;font-size:10px;letter-spacing:-0.5px;line-height:12px;letter-spacing:-0.5px">1.11420</div>
<div class="t" style="left:1145px;top:423px;color:#fff;font-size:10px;letter-spacing:-0.5px;line-height:12px;letter-spacing:-0.5px">1.11280</div>
<div class="t" style="left:1145px;top:456px;color:#fff;font-size:10px;letter-spacing:-0.5px;line-height:12px;letter-spacing:-0.5px">1.11140</div>
<div class="a" style="left:1142px;top:374px;width:39px;height:11px;background:#fff"></div>
<div class="t" style="left:1145px;top:375px;color:#000;font-size:10px;letter-spacing:-0.5px;line-height:12px">1.11478</div>
<div class="t" style="left:1px;top:468px;color:#fff;font-size:10px;letter-spacing:-0.5px;line-height:12px;letter-spacing:-0.3px">9 Jun 2017</div>
<div class="t" style="left:65px;top:468px;color:#fff;font-size:10px;letter-spacing:-0.5px;line-height:12px;letter-spacing:-0.3px">12 Jun 01:00</div>
<div class="t" style="left:129px;top:468px;color:#fff;font-size:10px;letter-spacing:-0.5px;line-height:12px;letter-spacing:-0.3px">12 Jun 17:00</div>
<div class="t" style="left:193px;top:468px;color:#fff;font-size:10px;letter-spacing:-0.5px;line-height:12px;letter-spacing:-0.3px">13 Jun 09:00</div>
<div class="t" style="left:257px;top:468px;color:#fff;font-size:10px;letter-spacing:-0.5px;line-height:12px;letter-spacing:-0.3px">14 Jun 01:00</div>
<div class="t" style="left:321px;top:468px;color:#fff;font-size:10px;letter-spacing:-0.5px;line-height:12px;letter-spacing:-0.3px">14 Jun 17:00</div>
<div class="t" style="left:385px;top:468px;color:#fff;font-size:10px;letter-spacing:-0.5px;line-height:12px;letter-spacing:-0.3px">15 Jun 09:00</div>
<div class="t" style="left:449px;top:468px;color:#fff;font-size:10px;letter-spacing:-0.5px;line-height:12px;letter-spacing:-0.3px">16 Jun 01:00</div>
<div class="t" style="left:513px;top:468px;color:#fff;font-size:10px;letter-spacing:-0.5px;line-height:12px;letter-spacing:-0.3px">16 Jun 17:00</div>
<div class="t" style="left:577px;top:468px;color:#fff;font-size:10px;letter-spacing:-0.5px;line-height:12px;letter-spacing:-0.3px">19 Jun 09:00</div>
<div class="t" style="left:641px;top:468px;color:#fff;font-size:10px;letter-spacing:-0.5px;line-height:12px;letter-spacing:-0.3px">20 Jun 01:00</div>
<div class="t" style="left:705px;top:468px;color:#fff;font-size:10px;letter-spacing:-0.5px;line-height:12px;letter-spacing:-0.3px">20 Jun 17:00</div>
<div class="t" style="left:769px;top:468px;color:#fff;font-size:10px;letter-spacing:-0.5px;line-height:12px;letter-spacing:-0.3px">21 Jun 09:00</div>
<div class="t" style="left:833px;top:468px;color:#fff;font-size:10px;letter-spacing:-0.5px;line-height:12px;letter-spacing:-0.3px">22 Jun 01:00</div>
<div class="t" style="left:897px;top:468px;color:#fff;font-size:10px;letter-spacing:-0.5px;line-height:12px;letter-spacing:-0.3px">22 Jun 17:00</div>
<div class="t" style="left:10px;top:414px;color:#fff;font-size:10px;letter-spacing:-0.5px;line-height:12px;">#125735242 sell 0.54</div>
<svg class="a" style="left:904px;top:3px" width="11" height="6"><path d="M0 0h11L5.5 5.5z" fill="#a8b8c8"/></svg>
</div>

<!-- terminal -->
<div class="a" style="left:4px;top:582px;width:1372px;height:1px;background:#fff"></div>
<svg class="a" style="left:8px;top:588px" width="8" height="8"><path d="M1 1l6 6M7 1L1 7" stroke="#000" stroke-width="1.8"/></svg>
<div class="a" style="left:5px;top:600px;width:13px;height:140px;background:#0a246a"></div>
<div class="t" style="left:5px;top:740px;color:#fff;transform:rotate(-90deg);transform-origin:0 0;line-height:13px;width:60px">Терминал</div>
<div class="a" style="left:19px;top:586px;width:1354px;height:155px;background:#fff;border-top:1px solid #808080;border-left:1px solid #808080;border-right:1px solid #fff;border-bottom:1px solid #fff"></div>
<div class="hd" style="left:20px;top:587px;width:109px;height:17px;padding-top:1px;text-align:left;padding-left:5px">Ордер<svg style="position:absolute;left:48px;top:3px" width="9" height="8"><path d="M4.5 0.5L8.5 7.5H0.5z" fill="none" stroke="#a0a0a0"/></svg></div>
<div class="hd" style="left:129px;top:587px;width:150px;height:17px;padding-top:1px">Время</div>
<div class="hd" style="left:279px;top:587px;width:75px;height:17px;padding-top:1px">Тип</div>
<div class="hd" style="left:354px;top:587px;width:58px;height:17px;padding-top:1px">Объем</div>
<div class="hd" style="left:412px;top:587px;width:75px;height:17px;padding-top:1px">Символ</div>
<div class="hd" style="left:487px;top:587px;width:84px;height:17px;padding-top:1px">Цена</div>
<div class="hd" style="left:571px;top:587px;width:83px;height:17px;padding-top:1px">S / L</div>
<div class="hd" style="left:654px;top:587px;width:83px;height:17px;padding-top:1px">T / P</div>
<div class="hd" style="left:737px;top:587px;width:83px;height:17px;padding-top:1px">Цена</div>
<div class="hd" style="left:820px;top:587px;width:82px;height:17px;padding-top:1px">Комиссия</div>
<div class="hd" style="left:902px;top:587px;width:82px;height:17px;padding-top:1px">Своп</div>
<div class="hd" style="left:984px;top:587px;width:126px;height:17px;padding-top:1px">Прибыль</div>
<div class="hd" style="left:1110px;top:587px;width:262px;height:17px;padding-top:1px">Комментарий</div>
<!-- row -->
<div class="a" style="left:128px;top:604px;width:1px;height:19px;background:#e4e4e4"></div>
<div class="a" style="left:278px;top:604px;width:1px;height:19px;background:#e4e4e4"></div>
<div class="a" style="left:353px;top:604px;width:1px;height:19px;background:#e4e4e4"></div>
<div class="a" style="left:411px;top:604px;width:1px;height:19px;background:#e4e4e4"></div>
<div class="a" style="left:486px;top:604px;width:1px;height:19px;background:#e4e4e4"></div>
<div class="a" style="left:570px;top:604px;width:1px;height:19px;background:#e4e4e4"></div>
<div class="a" style="left:653px;top:604px;width:1px;height:19px;background:#e4e4e4"></div>
<div class="a" style="left:736px;top:604px;width:1px;height:19px;background:#e4e4e4"></div>
<div class="a" style="left:819px;top:604px;width:1px;height:19px;background:#e4e4e4"></div>
<div class="a" style="left:901px;top:604px;width:1px;height:19px;background:#e4e4e4"></div>
<div class="a" style="left:983px;top:604px;width:1px;height:19px;background:#e4e4e4"></div>
<div class="a" style="left:1109px;top:604px;width:1px;height:19px;background:#e4e4e4"></div>
<svg class="a" style="left:23px;top:605px" width="14" height="17" viewBox="0 0 14 17">
<path d="M1.5 1.5h7l3 3v10h-10z" fill="#fff" stroke="#888"/><path d="M8.5 1.5v3h3" fill="none" stroke="#888"/>
<circle cx="10" cy="13" r="3.5" fill="#e25a1c" stroke="#a8380a"/>
</svg>
<div class="t" style="left:41px;top:607px">125735242</div>
<div class="cell" style="left:129px;top:606px;width:147px">2017.06.21 11:29:02</div>
<div class="cell" style="left:279px;top:606px;width:71px">sell</div>
<div class="cell" style="left:354px;top:606px;width:55px">0.54</div>
<div class="cell" style="left:412px;top:606px;width:72px">eurusd</div>
<div class="cell" style="left:487px;top:606px;width:81px">1.11292</div>
<div class="cell" style="left:571px;top:606px;width:80px">0.00000</div>
<div class="cell" style="left:654px;top:606px;width:80px">1.10531</div>
<div class="cell" style="left:737px;top:606px;width:80px">1.11493</div>
<div class="cell" style="left:820px;top:606px;width:79px">0.00</div>
<div class="cell" style="left:902px;top:606px;width:79px">-0.84</div>
<div class="cell" style="left:984px;top:606px;width:102px">-108.54</div>
<svg class="a" style="left:1096px;top:609px" width="9" height="9"><path d="M1 1l7 7M8 1L1 8" stroke="#777" stroke-width="1.8"/></svg>
<div class="cell" style="left:1110px;top:606px;width:258px">CALM</div>
<div class="a" style="left:20px;top:625px;width:1352px;height:19px;background:#c8c8c8"></div>
<svg class="a" style="left:22px;top:629px" width="16" height="9" viewBox="0 0 16 9"><circle cx="8" cy="4.5" r="2" fill="#444"/><path d="M4.5 1.5q-2 3 0 6M11.5 1.5q2 3 0 6M2 0.5q-3 4 0 8M14 0.5q3 4 0 8" stroke="#777" fill="none"/></svg>
<div class="t" style="left:41px;top:628px;font-weight:bold;font-size:12px;line-height:14px">Баланс: 50 056.70 USD&nbsp;&nbsp;Средства: 49 947.32&nbsp;&nbsp;Маржа: 120.20&nbsp;&nbsp;Свободная маржа: 49 827.12&nbsp;&nbsp;Уровень: 41555.11%</div>
<div class="cell" style="left:984px;top:628px;width:102px;font-weight:bold;font-size:12px">-109.38</div>
<!-- bottom tabs -->
<div class="a" style="left:20px;top:720px;width:1352px;height:20px;background:#d4d0c8;border-top:1px solid #000"></div>
<div class="a" style="left:21px;top:720px;width:68px;height:18px;background:#fff;border-left:1px solid #000;border-bottom:1px solid #000;border-right:1px solid #000"></div>
<div class="t" style="left:32px;top:723px">Торговля</div>
<div class="tab" style="left:98px;top:723px">Активы</div>
<div class="tab" style="left:157px;top:723px">История Счета</div>
<div class="tab" style="left:253px;top:723px">Новости<span style="position:relative;top:3px;left:2px;font-size:8px;color:#e0201a;font-weight:bold">99</span></div>
<div class="tab" style="left:328px;top:723px">Алерты</div>
<div class="tab" style="left:386px;top:723px">Почта<span style="position:relative;top:3px;left:3px;font-size:8px;color:#e0201a;font-weight:bold">13</span></div>
<div class="tab" style="left:449px;top:723px">Маркет</div>
<div class="tab" style="left:507px;top:723px">Сигналы</div>
<div class="tab" style="left:571px;top:723px">Библиотека</div>
<div class="tab" style="left:651px;top:723px">Эксперты</div>
<div class="tab" style="left:721px;top:723px">Журнал</div>
<div class="a" style="left:148px;top:724px;width:1px;height:12px;background:#333"></div>
<div class="a" style="left:245px;top:724px;width:1px;height:12px;background:#333"></div>
<div class="a" style="left:318px;top:724px;width:1px;height:12px;background:#333"></div>
<div class="a" style="left:377px;top:724px;width:1px;height:12px;background:#333"></div>
<div class="a" style="left:440px;top:724px;width:1px;height:12px;background:#333"></div>
<div class="a" style="left:498px;top:724px;width:1px;height:12px;background:#333"></div>
<div class="a" style="left:562px;top:724px;width:1px;height:12px;background:#333"></div>
<div class="a" style="left:642px;top:724px;width:1px;height:12px;background:#333"></div>
<div class="a" style="left:712px;top:724px;width:1px;height:12px;background:#333"></div>
<div class="a" style="left:772px;top:724px;width:1px;height:12px;background:#333"></div>


<div class="hsep" style="left:4px;top:743px;width:1372px"></div>
<div class="t" style="left:6px;top:751px">Для вызова справки нажмите F1</div>
<div class="sb" style="left:677px"></div>
<div class="t" style="left:683px;top:751px">Default</div>
<div class="sb" style="left:787px"></div>
<div class="sb" style="left:887px"></div>
<div class="sb" style="left:960px"></div>
<div class="sb" style="left:1031px"></div>
<div class="sb" style="left:1100px"></div>
<div class="sb" style="left:1170px"></div>
<div class="sb" style="left:1237px"></div>
<svg class="a" style="left:1361px;top:753px" width="14" height="14"><path d="M13 1L1 13M13 5L5 13M13 9L9 13" stroke="#808080" stroke-width="1.2"/><path d="M13 2L2 13M13 6L6 13M13 10L10 13" stroke="#fff"/></svg>

</body></html>
